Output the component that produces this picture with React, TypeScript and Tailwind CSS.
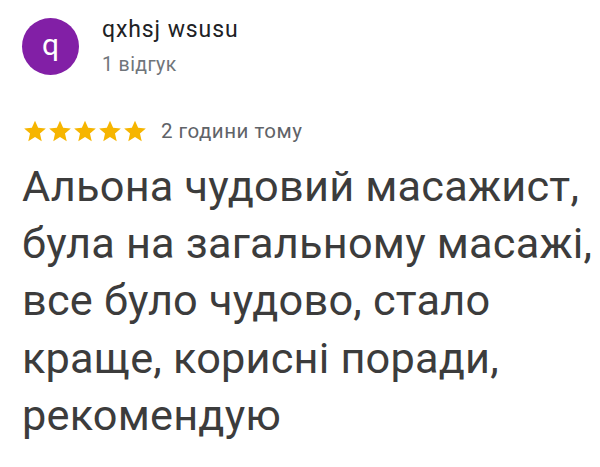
const font = { fontFamily: "Roboto, 'Noto Sans', sans-serif" };

function Star() {
  return (
    <svg viewBox="0 0 24 24" className="-mx-[0.5px] h-[26px] w-[26px]" fill="#f6b500">
      <path d="M12 2.5l2.9 6.6 7.1.6-5.4 4.7 1.6 7-6.2-3.8-6.2 3.8 1.6-7L2 9.7l7.1-.6z" />
    </svg>
  );
}

const lines = [
  "Альона чудовий масажист,",
  "була на загальному масажі,",
  "все було чудово, стало",
  "краще, корисні поради,",
  "рекомендую",
];

export default function App() {
  return (
    <div className="h-[467px] w-[600px] overflow-hidden bg-white pl-[22px] pt-[18px]" style={font}>
      <div className="flex items-start gap-[23px]">
        <div className="flex h-[57px] w-[57px] items-center justify-center rounded-full bg-[#821fa6] pb-[4px] text-[30px] text-white">
          q
        </div>
        <div className="-mt-[2px]">
          <div className="text-[23px] leading-[28px] tracking-[0.9px] text-[#202124]">qxhsj wsusu</div>
          <div className="mt-[8px] text-[19.5px] leading-[26px] tracking-[0.4px] text-[#70757a]">1 відгук</div>
        </div>
      </div>
      <div className="mt-[38px] flex items-center">
        <div className="flex">
          <Star />
          <Star />
          <Star />
          <Star />
          <Star />
        </div>
        <span className="ml-[14px] text-[20.5px] tracking-[0.5px] text-[#5f6368]">2 години тому</span>
      </div>
      <div className="mt-[11px] text-[43.3px] leading-[57.3px] tracking-[0.2px] text-[#3c3c3c]">
        {lines.map((l) => (
          <div key={l} className="whitespace-nowrap">
            {l}
          </div>
        ))}
      </div>
    </div>
  );
}
